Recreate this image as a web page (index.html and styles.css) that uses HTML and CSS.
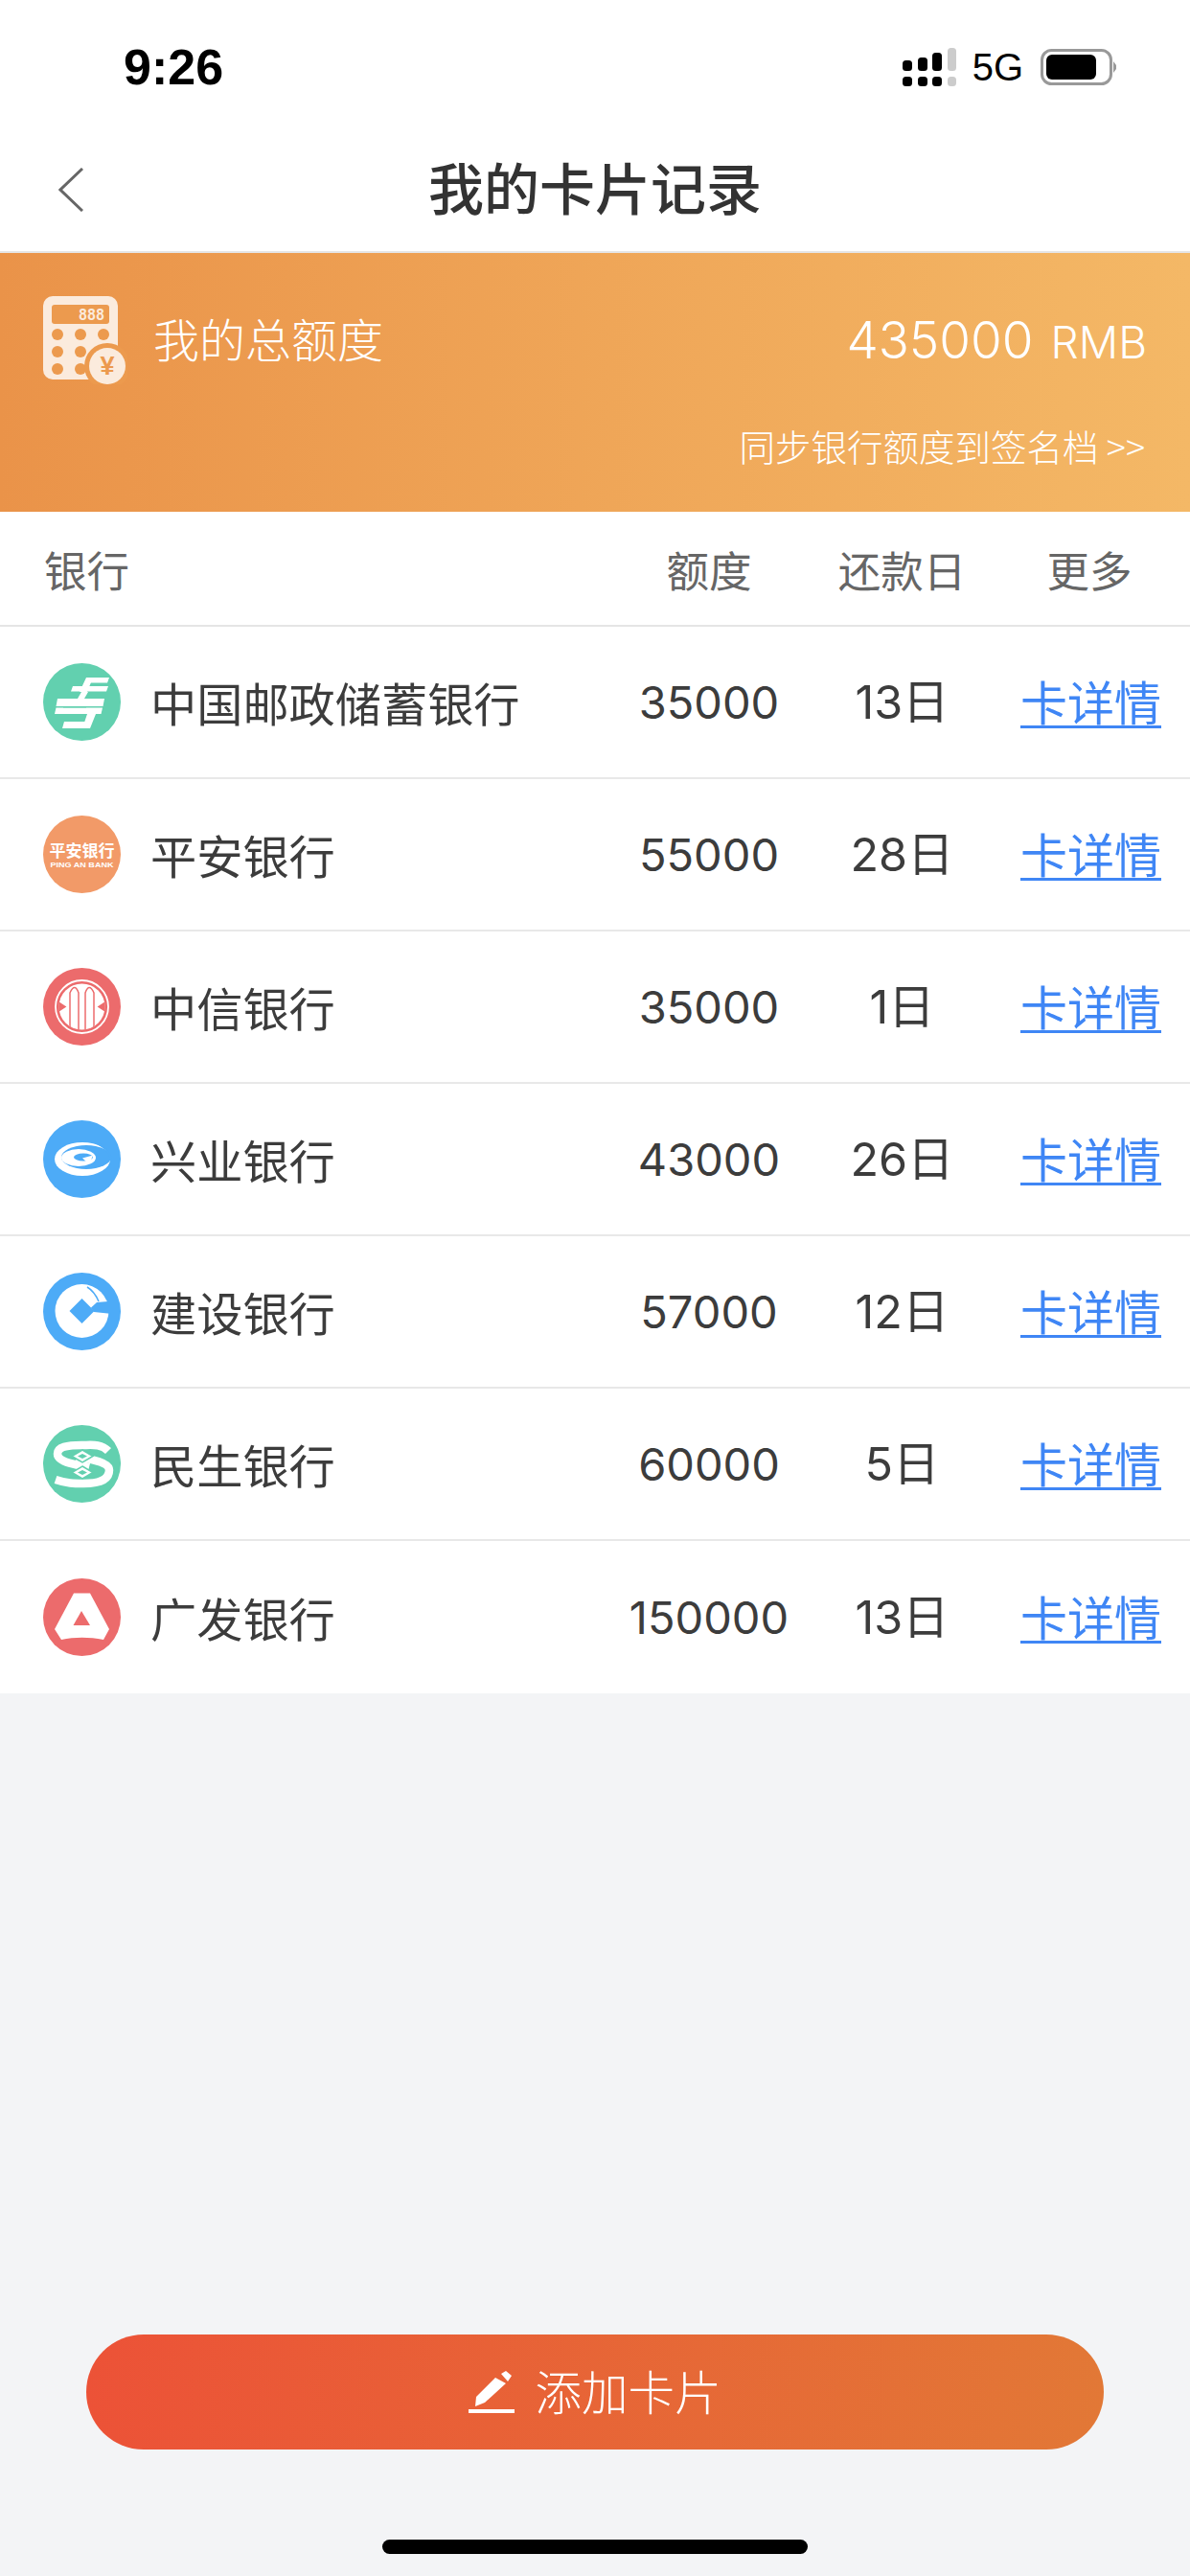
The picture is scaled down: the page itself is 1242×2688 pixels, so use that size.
FILE: index.html
```html
<!DOCTYPE html>
<html>
  <head>
    <meta charset="utf-8">
    <title>我的卡片记录</title>
    <link rel="stylesheet" href="styles.css">
  </head>
  <body>
    <div class="page">
      <div class="status">
        <span class="status-time">9:26</span>
        <div class="status-right">
          <svg class="signal" width="56" height="40" viewBox="0 0 56 40">
            <rect x="0" y="13" width="10" height="11" rx="3.5"/>
            <rect x="16" y="10" width="10" height="14" rx="3.5"/>
            <rect x="31" y="5" width="10" height="19" rx="3.5"/>
            <rect x="47" y="0" width="9" height="24" rx="3.5" fill="#ccc"/>
            <rect x="0" y="30" width="10" height="10" rx="3.5"/>
            <rect x="16" y="30" width="10" height="10" rx="3.5"/>
            <rect x="31" y="30" width="10" height="10" rx="3.5"/>
            <rect x="47" y="30" width="9" height="10" rx="3.5" fill="#ccc"/>
          </svg>
          <span class="status-net">5G</span>
          <svg class="battery" width="80" height="38" viewBox="0 0 80 38">
            <rect x="1.500" y="1.500" width="72" height="35" rx="10" fill="none" stroke="#999" stroke-width="3"/>
            <rect x="6" y="6" width="52" height="26" rx="6"/>
            <path d="M76 13l3 4v4l-3 4z" fill="#999"/>
          </svg>
        </div>
      </div>

      <header class="nav">
        <svg class="nav-back" width="26" height="46" viewBox="0 0 26 46">
          <path d="M25 1L2 23l23 22" fill="none" stroke="#666" stroke-width="3"/>
        </svg>
        <h1 class="nav-title">我的卡片记录</h1>
      </header>

      <section class="total">
        <div class="total-top">
          <svg class="total-icon" width="88" height="92" viewBox="0 0 88 92">
            <rect x="0" y="0" width="78" height="87" rx="10" fill="#fbebdd"/>
            <rect x="9" y="9" width="60" height="20" rx="3" fill="#ec9a4e"/>
            <text class="calc-digits" x="37" y="25" textLength="27" lengthAdjust="spacingAndGlyphs">888</text>
            <g fill="#ec9a4e">
              <circle cx="15" cy="40" r="6"/>
              <circle cx="39" cy="40" r="6"/>
              <circle cx="63" cy="40" r="6"/>
              <circle cx="15" cy="58" r="6"/>
              <circle cx="39" cy="58" r="6"/>
              <circle cx="15" cy="76" r="6"/>
              <circle cx="39" cy="76" r="6"/>
              <circle cx="67" cy="73" r="24"/>
            </g>
            <circle cx="67" cy="73" r="19" fill="#fbebdd"/>
            <text class="calc-yen" x="67" y="82" text-anchor="middle">¥</text>
          </svg>
          <span class="total-label">我的总额度</span>
          <span class="total-amount">435000<small>RMB</small></span>
        </div>
        <div class="total-sync">同步银行额度到签名档 &gt;&gt;</div>
      </section>

      <section class="cards">
        <div class="cards-head">
          <span class="col-bank">银行</span>
          <span class="col-num">额度</span>
          <span class="col-num col-date">还款日</span>
          <span class="col-num">更多</span>
        </div>

        <div class="card-row">
          <div class="bank">
            <svg class="bank-logo" viewBox="0 0 81 81">
              <circle cx="40.5" cy="40.5" r="40.5" fill="#62d0af"/>
              <g fill="#fff">
                <path d="M48 15H69L67 20.500H45Z"/>
                <path d="M31 24H68L66 29.500H29Z"/>
                <path d="M15 37H64L62.500 45H13.500Z"/>
                <path d="M13.500 46.500H62L60.500 53H12Z"/>
                <path d="M22 61H48L46 68H20Z"/>
                <path d="M45 15H52L46 30H38Z"/>
                <path d="M40 30H47L43 37H36Z"/>
                <path d="M46 53H55L49 68H41Z"/>
              </g>
              <path d="M21 45.700H45" fill="none" stroke="#62d0af" stroke-width="1.500"/>
            </svg>
            <span>中国邮政储蓄银行</span>
          </div>
          <span class="col-num">35000</span>
          <span class="col-num col-date">13日</span>
          <a class="col-num card-link">卡详情</a>
        </div>

        <div class="card-row">
          <div class="bank">
            <svg class="bank-logo" viewBox="0 0 81 81">
              <circle cx="40.5" cy="40.5" r="40.5" fill="#f29a68"/>
              <text class="logo-cn" x="40.5" y="43" text-anchor="middle">平安银行</text>
              <text class="logo-en" x="7.5" y="54" textLength="66" lengthAdjust="spacingAndGlyphs">PING AN BANK</text>
            </svg>
            <span>平安银行</span>
          </div>
          <span class="col-num">55000</span>
          <span class="col-num col-date">28日</span>
          <a class="col-num card-link">卡详情</a>
        </div>

        <div class="card-row">
          <div class="bank">
            <svg class="bank-logo" viewBox="0 0 81 81">
              <clipPath id="citic-inner"><circle cx="40.5" cy="40.5" r="24"/></clipPath>
              <circle cx="40.5" cy="40.5" r="40.5" fill="#ec6b6c"/>
              <circle cx="40.5" cy="40.5" r="27.500" fill="none" stroke="#fff" stroke-width="1.800"/>
              <circle cx="40.5" cy="40.5" r="24" fill="#fff"/>
              <g clip-path="url(#citic-inner)" fill="none" stroke="#ec6b6c" stroke-width="1.500">
                <path d="M28 66V26Q33 15 37 26V66"/>
                <path d="M44 66V26Q48 15 53 26V66"/>
                <path d="M16 36L23 40.500L16 45ZM65 36L58 40.500L65 45Z" fill="#ec6b6c"/>
              </g>
            </svg>
            <span>中信银行</span>
          </div>
          <span class="col-num">35000</span>
          <span class="col-num col-date">1日</span>
          <a class="col-num card-link">卡详情</a>
        </div>

        <div class="card-row">
          <div class="bank">
            <svg class="bank-logo" viewBox="0 0 81 81">
              <circle cx="40.5" cy="40.5" r="40.5" fill="#4dabf7"/>
              <ellipse cx="41" cy="40.500" rx="29" ry="17.500" fill="#fff"/>
              <ellipse cx="45" cy="38.500" rx="26" ry="12.500" fill="#4dabf7"/>
              <ellipse cx="37" cy="39" rx="18" ry="9" fill="#fff"/>
              <ellipse cx="42" cy="38.500" rx="10" ry="4" fill="#4dabf7"/>
              <path d="M41 39.500L52 36.500L50 41.500L46 44" fill="#fff"/>
              <path d="M56 24C62 26 68 31 71 40" fill="none" stroke="#4dabf7" stroke-width="2"/>
            </svg>
            <span>兴业银行</span>
          </div>
          <span class="col-num">43000</span>
          <span class="col-num col-date">26日</span>
          <a class="col-num card-link">卡详情</a>
        </div>

        <div class="card-row">
          <div class="bank">
            <svg class="bank-logo" viewBox="0 0 81 81">
              <circle cx="40.5" cy="40.5" r="40.5" fill="#4dabf7"/>
              <circle cx="40.5" cy="40" r="28" fill="#fff"/>
              <path d="M40.500 27L53.500 40L40.500 53L27.500 40Z" fill="#4dabf7"/>
              <path d="M50 36.500L56 31L68 30L72 30V43L53 41Z" fill="#4dabf7"/>
              <path d="M46 15C51 18 55 23 58 30" fill="none" stroke="#4dabf7" stroke-width="1.500"/>
            </svg>
            <span>建设银行</span>
          </div>
          <span class="col-num">57000</span>
          <span class="col-num col-date">12日</span>
          <a class="col-num card-link">卡详情</a>
        </div>

        <div class="card-row">
          <div class="bank">
            <svg class="bank-logo" viewBox="0 0 81 81">
              <circle cx="40.5" cy="40.5" r="40.5" fill="#62d0af"/>
              <path d="M68 27C60 19 50 21 40 21C25 21 15 23 15 30C15 40 40 42 48 44" fill="none" stroke="#fff" stroke-width="8.500"/>
              <path d="M13 57C25 61 32 61 42 61C58 61 69 57 69 47C69 38 45 35 35 33" fill="none" stroke="#fff" stroke-width="8.500"/>
              <path d="M41 26L52 32.500L41 39L30 32.500ZM41 43L52 49.500L41 56L30 49.500Z" fill="#fff" stroke="#62d0af" stroke-width="1.500"/>
              <path d="M41 30L46 32.500L41 35L36 32.500ZM41 47L46 49.500L41 52L36 49.500Z" fill="#62d0af"/>
            </svg>
            <span>民生银行</span>
          </div>
          <span class="col-num">60000</span>
          <span class="col-num col-date">5日</span>
          <a class="col-num card-link">卡详情</a>
        </div>

        <div class="card-row">
          <div class="bank">
            <svg class="bank-logo" viewBox="0 0 81 81">
              <circle cx="40.5" cy="40.5" r="40.5" fill="#ec6b6c"/>
              <path d="M32 15.500H49L69 53L63 64C48 61 33 61 19 64L12 53Z" fill="#fff"/>
              <path d="M40 34L49 49H31.500Z" fill="#ec6b6c"/>
            </svg>
            <span>广发银行</span>
          </div>
          <span class="col-num">150000</span>
          <span class="col-num col-date">13日</span>
          <a class="col-num card-link">卡详情</a>
        </div>
      </section>

      <div class="add-wrap">
        <button class="add-btn">
          <svg width="48" height="44" viewBox="0 0 48 44">
            <path d="M8 27L28 7L39 13L17 33L7 37ZM34 3L39 0L45 5L41 11Z" fill="#fff"/>
            <rect x="0" y="40" width="48" height="4" fill="#fff"/>
          </svg>
          <span>添加卡片</span>
        </button>
      </div>

      <div class="home-bar"></div>
    </div>
  </body>
</html>
```

FILE: styles.css
```css
* { box-sizing: border-box; }

body {
  margin: 0;
  background-color: #f3f4f6;
  font-family: "Noto Sans CJK SC", "Liberation Sans", sans-serif;
  color: #3c3c3c;
}

.page {
  height: 2688px;
  display: flex;
  flex-direction: column;
  overflow: hidden;
}

/* status bar */
.status {
  height: 132px;
  flex: none;
  background-color: #fff;
  display: flex;
  justify-content: space-between;
  align-items: center;
  padding: 8px 76px 0 129px;
  color: #000;
  font-family: "Liberation Sans", sans-serif;
}
.status-time { font-size: 52px; font-weight: bold; }
.status-right { display: flex; align-items: center; }
.status-net { font-size: 40px; margin: 0 18px 0 17px; }
.signal, .battery { display: block; }

/* nav */
.nav {
  height: 132px;
  flex: none;
  background-color: #fff;
  border-bottom: 2px solid #e5e5e5;
  display: flex;
  align-items: center;
  justify-content: center;
  position: relative;
}
.nav-back { position: absolute; left: 61px; top: 43px; }
.nav-title {
  margin: 0;
  padding-bottom: 6px;
  font-size: 58px;
  font-weight: 500;
  color: #333;
}

/* total banner */
.total {
  height: 270px;
  flex: none;
  background: linear-gradient(90deg, #ea9349, #f4b866);
  color: #fff;
  padding: 45px 45px 0;
}
.total-top { display: flex; align-items: center; }
.total-icon { flex: none; }
.total-label {
  font-size: 48px;
  font-weight: 300;
  margin-left: 27px;
  padding-bottom: 6px;
}
.total-amount {
  margin-left: auto;
  font-family: "Inter", sans-serif;
  font-weight: 300;
  font-size: 53px;
}
.total-amount small { font-size: 46px; margin-left: 18px; }
.total-sync {
  margin: 36px 2px 0 0;
  text-align: right;
  font-size: 37.5px;
  font-weight: 300;
}
.calc-digits { font: bold 19px "Liberation Mono", monospace; fill: #fbebdd; }
.calc-yen { font: bold 27px "Liberation Sans", sans-serif; fill: #ec9a4e; }

/* card table */
.cards { background-color: #fff; flex: none; }
.cards-head, .card-row {
  display: grid;
  grid-template-columns: 1fr 200px 200px 194px;
  align-items: center;
  padding: 0 8px 0 45px;
}
.cards-head {
  height: 120px;
  border-bottom: 2px solid #e5e5e5;
  font-size: 44.5px;
  color: #666;
}
.card-row {
  height: 159px;
  font-size: 48.2px;
  border-bottom: 2px solid #e8e8e8;
}
.card-row:last-child { border-bottom: none; }
.card-row .col-num {
  font-size: 47px;
  font-family: "Inter", "Noto Sans CJK SC", sans-serif;
  line-height: 60px;
}
.col-bank { padding-left: 1px; }
.col-num { text-align: center; }
.col-date { padding-left: 3px; }
.card-row .col-date { font-size: 48.5px; }
.bank { display: flex; align-items: center; gap: 31px; }
.bank span { padding-bottom: 2px; }
.bank-logo { width: 81px; height: 81px; flex: none; }
.logo-cn { font: bold 17px "Noto Sans CJK SC", sans-serif; fill: #fff; }
.logo-en { font: bold 7.5px "Liberation Sans", sans-serif; fill: #fff; }
.card-row .card-link {
  color: #3f86f5;
  padding: 0 0 3px 3px;
  font-family: "Noto Sans CJK SC", sans-serif;
  font-size: 49px;
  text-decoration: underline;
  text-decoration-thickness: 3px;
  text-underline-offset: 5px;
}

/* add button */
.add-wrap { margin-top: auto; padding: 0 90px 94px; }
.add-btn {
  width: 100%;
  height: 120px;
  border: none;
  border-radius: 60px;
  background: linear-gradient(90deg, #ec5237, #e27836);
  color: #fff;
  font-family: inherit;
  font-size: 48.5px;
  font-weight: 300;
  display: flex;
  align-items: center;
  justify-content: center;
  gap: 21px;
  padding: 0;
}
.add-btn span { padding-bottom: 5px; }

.home-bar {
  flex: none;
  width: 444px;
  height: 15px;
  margin: 0 auto 23px;
  border-radius: 8px;
  background-color: #000;
}
```
